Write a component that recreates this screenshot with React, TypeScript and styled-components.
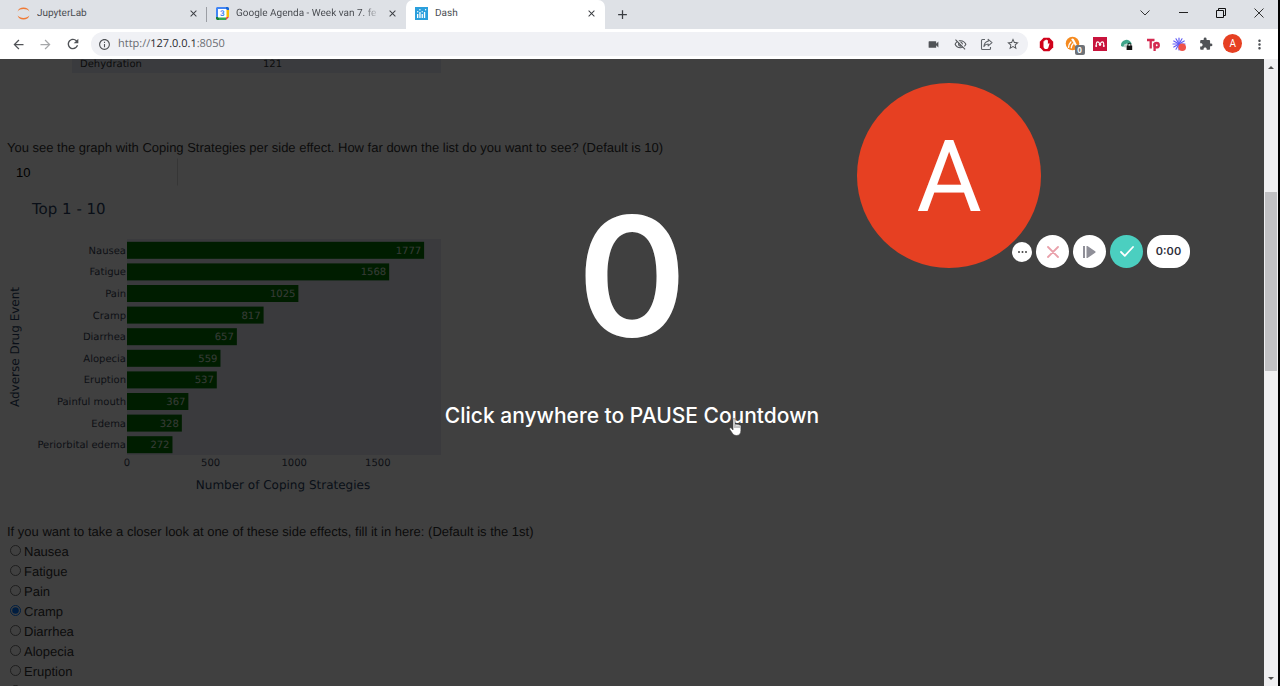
import React, { useState } from "react";
import styled, { createGlobalStyle } from "styled-components";
import {
  MdArrowBack,
  MdArrowForward,
  MdRefresh,
  MdInfoOutline,
  MdVideocam,
  MdOutlineVisibilityOff,
  MdStarBorder,
  MdExtension,
  MdMoreVert,
  MdClose,
  MdAdd,
} from "react-icons/md";

const uiFont = `"Open Sans", "Noto Sans", sans-serif`;
const tabFont = `Roboto, "Open Sans", sans-serif`;
const pageFont = `"Liberation Sans", Arial, sans-serif`;
const plotFont = `"DejaVu Sans", Verdana, sans-serif`;

const GlobalStyle = createGlobalStyle`
  * { box-sizing: border-box; }
  body { margin: 0; background: #000; font-family: ${pageFont}; text-rendering: geometricPrecision; }
  button { border: 0; padding: 0; background: none; color: inherit; font: inherit; cursor: pointer; }
`;

const Window = styled.div`
  display: flex;
  flex-direction: column;
  height: 100vh;
  margin-right: 2px;
  overflow: hidden;
  background: #fff;
`;

/* ---------- tab strip ---------- */

const TabStrip = styled.header`
  display: flex;
  flex: none;
  height: 29px;
  background: #dee1e6;
  color: #4a4d52;
  font: 10px/26px ${tabFont};
`;

const Tab = styled.div<{ $active?: boolean; $divider?: boolean }>`
  position: relative;
  display: flex;
  align-items: center;
  gap: 7px;
  width: 199px;
  height: 29px;
  padding: 0 8px 2px 9px;
  border-radius: 7px 7px 0 0;
  background: ${(p) => (p.$active ? "#fff" : "transparent")};

  &::before {
    content: "";
    position: absolute;
    display: ${(p) => (p.$divider ? "block" : "none")};
    left: -1px;
    top: 7px;
    width: 1px;
    height: 15px;
    background: #9b9ea4;
  }
`;

const FirstTab = styled(Tab)`
  width: 207px;
  padding-left: 17px;
`;

const TabTitle = styled.span<{ $fade?: boolean }>`
  flex: 1;
  min-width: 0;
  overflow: hidden;
  white-space: nowrap;
  ${(p) => p.$fade && "mask-image: linear-gradient(to right, #000 88%, transparent);"}
`;

const TabButton = styled.button`
  display: flex;
  color: #3a3d42;
`;

const NewTab = styled(TabButton)`
  align-items: center;
  justify-content: center;
  width: 34px;
  height: 28px;
`;

const WindowControls = styled.div`
  display: flex;
  margin-left: auto;
`;

const WindowButton = styled.button`
  display: flex;
  align-items: center;
  justify-content: center;
  width: 38px;
  height: 25px;
`;

/* ---------- toolbar ---------- */

const Toolbar = styled.nav`
  display: flex;
  flex: none;
  align-items: center;
  gap: 9px;
  height: 30px;
  padding: 0 9px;
  background: #fff;
  color: #505357;
`;

const NavButtons = styled.div`
  display: flex;
  gap: 8px;
`;

const ToolButton = styled.button<{ $muted?: boolean }>`
  position: relative;
  display: flex;
  align-items: center;
  justify-content: center;
  width: 19px;
  height: 20px;
  opacity: ${(p) => (p.$muted ? 0.5 : 1)};
`;

const AddressBar = styled.div`
  display: flex;
  flex: 1;
  align-items: center;
  gap: 7px;
  min-width: 0;
  height: 24px;
  padding: 0 5px 0 7px;
  border-radius: 12px;
  background: #f0f1f5;
`;

const AddressText = styled.div`
  flex: 1;
  color: #6a6d72;
  font: 11px/22px ${uiFont};

  b { font-weight: 400; color: #26282c; }
`;

const ToolGroup = styled.div<{ $width: number }>`
  display: flex;
  justify-content: space-between;
  width: ${(p) => p.$width}px;
`;

const Badge = styled.span`
  position: absolute;
  right: -2px;
  bottom: -1px;
  width: 10px;
  border-radius: 2px;
  background: #6e7277;
  color: #fff;
  font: 700 8px/10px ${uiFont};
  text-align: center;
`;

const Avatar = styled.button`
  width: 19px;
  height: 19px;
  border-radius: 50%;
  background: #e64022;
  color: #fff;
  font: 10px/19px Roboto, sans-serif;
`;

/* ---------- page ---------- */

const Viewport = styled.div`
  display: flex;
  flex: 1;
  min-height: 0;
`;

const Frame = styled.main`
  position: relative;
  flex: 1;
  min-width: 0;
  overflow: hidden;
  background: #fff;
`;

const Report = styled.div`
  padding-left: 7px;
  color: #333;
  font: 13px/20px ${pageFont};
`;

const EventTable = styled.table`
  width: 369px;
  margin: 0 0 65px 65px;
  border-collapse: collapse;
  background: #e5ecf6;
  font: 10px/12px ${plotFont};

  td { padding: 0 0 2px 8px; }
  td + td { width: 178px; padding-left: 0; }
`;

const Question = styled.label`
  display: block;
`;

const Amount = styled.input`
  display: block;
  width: 171px;
  height: 28px;
  margin: 0 0 4px;
  padding: 0 8px;
  border: 1px solid transparent;
  border-right-color: #d8d8d8;
  background: #fff;
  color: #000;
  font: 13px/20px ${pageFont};
`;

const Chart = styled.svg`
  display: block;
  margin-bottom: 22px;
  font-family: ${plotFont};
`;

const Choices = styled.fieldset`
  margin: 0;
  padding: 0;
  border: 0;

  legend { padding: 0; }
`;

const Choice = styled.label`
  display: flex;
  align-items: center;
  gap: 3px;
  padding-left: 3px;
`;

const Radio = styled.input`
  width: 11px;
  height: 11px;
  margin: 0 0 3px;
`;

/* ---------- recorder overlay ---------- */

const Countdown = styled.button`
  position: absolute;
  inset: 0;
  display: flex;
  flex-direction: column;
  align-items: center;
  gap: 40px;
  width: 100%;
  padding-top: 132px;
  background: rgba(0, 0, 0, 0.75);
  color: #fff;
  font-family: Inter, sans-serif;
  font-weight: 500;
`;

const Count = styled.span`
  font-size: 166px;
  font-weight: 600;
  line-height: 170px;
`;

const Caption = styled.span`
  font-size: 21px;
  line-height: 30px;
`;

const Pointer = styled.svg`
  position: absolute;
  left: calc(50% + 97px);
  top: 359px;
`;

const Bubble = styled.div`
  position: absolute;
  top: 24px;
  right: 223px;
  width: 184px;
  height: 185px;
  border-radius: 50%;
  background: #e64022;
  color: #fff;
  font: 100px/189px Roboto, sans-serif;
  text-align: center;
`;

const RecorderBar = styled.div`
  position: absolute;
  top: 176px;
  right: 74px;
  display: flex;
  align-items: center;
  gap: 4px;
`;

const RoundButton = styled.button<{ $size?: number; $accent?: boolean }>`
  display: flex;
  align-items: center;
  justify-content: center;
  width: ${(p) => p.$size ?? 33}px;
  height: ${(p) => p.$size ?? 33}px;
  border-radius: 50%;
  background: ${(p) => (p.$accent ? "#4bcfc0" : "#fff")};
`;

const Timer = styled.time`
  width: 43px;
  border-radius: 16px;
  background: #fff;
  color: #2e2e3a;
  font: 600 11px/33px Inter, sans-serif;
  text-align: center;
`;

/* ---------- scroll bar ---------- */

const ScrollBar = styled.div`
  display: flex;
  flex: none;
  flex-direction: column;
  align-items: center;
  width: 14px;
  background: #f0f0f2;
`;

const ScrollArrow = styled.svg`
  flex: none;
  width: 14px;
  height: 16px;
`;

const ScrollGap = styled.div<{ $share: number }>`
  flex: ${(p) => p.$share};
`;

const ScrollThumb = styled(ScrollGap)`
  width: 12px;
  background: #c1c1c4;
`;

/* ---------- drawings ---------- */

const JupyterIcon = () => (
  <svg width="13" height="13" viewBox="0 0 13 13" fill="#f07a35">
    <path d="M.6 4.500C1.200 2 3.600.5 6.500.5S11.800 2 12.400 4.500C11 2.900 9 2.100 6.500 2.100S2 2.900.6 4.500z" />
    <path d="M.6 8.500C1.200 11 3.600 12.500 6.500 12.500S11.800 11 12.400 8.500C11 10.100 9 10.900 6.500 10.900S2 10.100.6 8.500z" />
  </svg>
);

const CalendarIcon = () => (
  <svg width="13" height="13" viewBox="0 0 13 13">
    <path d="M1 0h9v3H3v7H0V1z" fill="#4285f4" />
    <path d="M10 0h2l1 1v2h-3z" fill="#1967d2" />
    <path d="M10 3h3v7h-3z" fill="#fbbc04" />
    <path d="M3 10h7v3H3z" fill="#34a853" />
    <path d="M0 10h3v3H1l-1-1z" fill="#188038" />
    <path d="M10 10h3l-3 3z" fill="#ea4335" />
    <path d="M2 2h8.500v8.500H2z" fill="#fff" />
    <text x="6.300" y="9.200" fontSize="8" fontWeight="700" fill="#4285f4" textAnchor="middle">3</text>
  </svg>
);

const DashIcon = () => (
  <svg width="13" height="13" viewBox="0 0 13 13">
    <path d="M0 0h13v13H0z" fill="#2b9fdc" />
    <g fill="#fff">
      <rect x="2" y="7" width="1.300" height="4" />
      <rect x="4.300" y="5" width="1.300" height="6" />
      <rect x="6.600" y="7" width="1.300" height="4" />
      <rect x="8.900" y="5" width="1.300" height="6" />
      <circle cx="2.700" cy="4.800" r=".7" />
      <circle cx="4.900" cy="2.800" r=".7" />
      <circle cx="7.200" cy="4.800" r=".7" />
      <circle cx="10.600" cy="2.800" r=".7" />
    </g>
  </svg>
);

const ShareIcon = () => (
  <svg width="13" height="13" viewBox="0 0 13 13" fill="none" stroke="#5f6368" strokeWidth="1.100" strokeLinejoin="round">
    <path d="M5 1.500H2.500a1 1 0 0 0-1 1v8a1 1 0 0 0 1 1h7a1 1 0 0 0 1-1V9" />
    <path d="M8.200 1.300 12 4.600 8.200 7.900V6C6.200 6 4.800 6.800 3.900 8.500 4.200 5.500 5.600 3.500 8.200 3.200z" />
  </svg>
);

const BlockerIcon = () => (
  <svg width="15" height="15" viewBox="0 0 15 15">
    <path d="M4.600.8h5.800l3.800 3.900v5.600l-3.800 3.900H4.600L.8 10.300V4.700z" fill="#d0021b" />
    <path d="M4.500 7V4.600c0-.8 1-.8 1 0V3.500c0-.8 1.100-.8 1.100 0V3c0-.8 1.200-.8 1.200 0v.6c0-.8 1.100-.8 1.100 0v4l.5-1c.5-.7 1.300-.4 1.100.2L9.400 10.500c-.4 1.100-1.100 1.600-2.200 1.600-1.800 0-2.700-1.200-2.700-2.900z" fill="#fff" />
  </svg>
);

const AvastIcon = () => (
  <svg width="16" height="16" viewBox="0 0 16 16">
    <circle cx="7.500" cy="7.500" r="6.800" fill="#f58a1f" />
    <path d="M6.200 3.200c.6-1 2-1 2.700 0l3.300 6.300-1.600 1z" fill="#fff" />
    <path d="M3.600 11.200c.2-2.200 1-4 2.300-5.200M6.300 11.800c.1-1.800.7-3 1.800-4" stroke="#fff" strokeWidth="1.400" fill="none" strokeLinecap="round" />
  </svg>
);

const MendeleyIcon = () => (
  <svg width="14" height="14" viewBox="0 0 14 14">
    <path d="M0 0h14v14H0z" fill="#c8143c" />
    <path d="M3.300 8.500C3.100 6 3.700 4.900 4.600 4.900S6.400 6 7 7c.6-1 1.500-2.100 2.400-2.100s1.500 1.100 1.300 3.600" stroke="#fff" strokeWidth="1.100" fill="none" />
    <g fill="#fff"><circle cx="3.200" cy="9" r="1" /><circle cx="7" cy="7.600" r="1.300" /><circle cx="10.800" cy="9" r="1" /></g>
  </svg>
);

const PrivacyIcon = () => (
  <svg width="13" height="13" viewBox="0 0 13 13">
    <path d="M1 8A5.500 5.500 0 0 1 11.800 6L8.500 6.500C6.500 4.800 4 6 3.400 9z" fill="#3fa58a" />
    <path d="M3.400 9c.3-2 1.700-3.500 3.600-3.200L6 9.500z" fill="#b9cfc9" />
    <path d="M6.600 7.600h5.600V12H6.600z" fill="#111" />
    <path d="M7.900 8V6.700c0-1.900 3-1.900 3 0V8" fill="none" stroke="#111" strokeWidth="1" />
  </svg>
);

const TpIcon = () => (
  <svg width="15" height="15" viewBox="0 0 15 15" fill="none" stroke="#d42a50" strokeWidth="2.300">
    <path d="M1 3h7.500M4.700 3v8.500M8.600 14V6" />
    <circle cx="10.600" cy="8.200" r="2.200" />
  </svg>
);

const LoomIcon = () => (
  <svg width="15" height="15" viewBox="0 0 15 15">
    <g stroke="#625df5" strokeWidth="1.200" strokeLinecap="round">
      {[0, 30, 60, 90, 120, 150].map((angle) => (
        <path key={angle} d="M7 1v12" transform={`rotate(${angle} 7 7)`} />
      ))}
    </g>
    <circle cx="10.200" cy="10.200" r="3.800" fill="#ee5349" />
  </svg>
);

/* ---------- chart ---------- */

const events = [
  { name: "Nausea", count: 1777 },
  { name: "Fatigue", count: 1568 },
  { name: "Pain", count: 1025 },
  { name: "Cramp", count: 817 },
  { name: "Diarrhea", count: 657 },
  { name: "Alopecia", count: 559 },
  { name: "Eruption", count: 537 },
  { name: "Painful mouth", count: 367 },
  { name: "Edema", count: 328 },
  { name: "Periorbital edema", count: 272 },
];

const PLOT = { left: 120, top: 49, width: 314, height: 216 };
const scaleX = (value: number) => PLOT.left + (value * PLOT.width) / 1878;
const rowHeight = PLOT.height / events.length;

const StrategyChart = () => (
  <Chart width="450" height="310" role="img" aria-label="Number of coping strategies per adverse drug event">
    <text x="25" y="24" fontSize="15" fill="#2a3f5f">Top 1 - 10</text>
    <rect x={PLOT.left} y={PLOT.top} width={PLOT.width} height={PLOT.height} fill="#e5e7f4" />
    {events.map(({ name, count }, i) => {
      const middle = PLOT.top + rowHeight * (i + 0.5);
      return (
        <g key={name} fontSize="10" textAnchor="end">
          <text x={PLOT.left - 1} y={middle + 4} fill="#3c4658">{name}</text>
          <rect x={PLOT.left} y={middle - 8} width={scaleX(count) - PLOT.left} height="17" fill="#007400" />
          <text x={scaleX(count) - 3} y={middle + 4} fill="#d8e8d8">{count}</text>
        </g>
      );
    })}
    {[0, 500, 1000, 1500].map((tick) => (
      <text key={tick} x={scaleX(tick)} y="276" fontSize="10" textAnchor="middle" fill="#3c4658">{tick}</text>
    ))}
    <text x="276" y="299" fontSize="12" textAnchor="middle" fill="#2a3f5f">Number of Coping Strategies</text>
    <text transform="translate(12 157) rotate(-90)" fontSize="12" textAnchor="middle" fill="#2a3f5f">Adverse Drug Event</text>
  </Chart>
);

export default function App() {
  const [amount, setAmount] = useState("10");
  const [selected, setSelected] = useState("Cramp");

  return (
    <>
      <GlobalStyle />
      <Window>
        <TabStrip>
          <FirstTab>
            <JupyterIcon />
            <TabTitle>JupyterLab</TabTitle>
            <TabButton aria-label="Close tab"><MdClose size={11} /></TabButton>
          </FirstTab>
          <Tab $divider>
            <CalendarIcon />
            <TabTitle $fade>Google Agenda - Week van 7. fe</TabTitle>
            <TabButton aria-label="Close tab"><MdClose size={11} /></TabButton>
          </Tab>
          <Tab $active>
            <DashIcon />
            <TabTitle>Dash</TabTitle>
            <TabButton aria-label="Close tab"><MdClose size={11} /></TabButton>
          </Tab>
          <NewTab aria-label="New tab"><MdAdd size={15} /></NewTab>
          <WindowControls>
            <WindowButton aria-label="Search tabs">
              <svg width="10" height="6" fill="none" stroke="#333"><path d="M.5.5 5 5 9.500.5" /></svg>
            </WindowButton>
            <WindowButton aria-label="Minimize">
              <svg width="9" height="1"><path d="M0 0h9v1H0z" fill="#222" /></svg>
            </WindowButton>
            <WindowButton aria-label="Restore">
              <svg width="10" height="10" fill="none" stroke="#111"><path d="M.5 2.500h7v7h-7zM2.500 2.500v-2h7v7h-2" /></svg>
            </WindowButton>
            <WindowButton aria-label="Close window">
              <svg width="10" height="10" fill="none" stroke="#333"><path d="M.5.5l9 9M9.500.5l-9 9" /></svg>
            </WindowButton>
          </WindowControls>
        </TabStrip>

        <Toolbar>
          <NavButtons>
            <ToolButton aria-label="Back"><MdArrowBack size={15} /></ToolButton>
            <ToolButton aria-label="Forward" $muted><MdArrowForward size={15} /></ToolButton>
            <ToolButton aria-label="Reload"><MdRefresh size={16} /></ToolButton>
          </NavButtons>
          <AddressBar>
            <MdInfoOutline size={13} />
            <AddressText>http://<b>127.0.0.1</b>:8050</AddressText>
            <ToolGroup $width={99}>
              <ToolButton aria-label="Camera"><MdVideocam size={13} /></ToolButton>
              <ToolButton aria-label="Cookies blocked"><MdOutlineVisibilityOff size={13} /></ToolButton>
              <ToolButton aria-label="Share"><ShareIcon /></ToolButton>
              <ToolButton aria-label="Bookmark"><MdStarBorder size={14} /></ToolButton>
            </ToolGroup>
          </AddressBar>
          <ToolGroup $width={232}>
            <ToolButton aria-label="Content blocker"><BlockerIcon /></ToolButton>
            <ToolButton aria-label="Avast"><AvastIcon /><Badge>0</Badge></ToolButton>
            <ToolButton aria-label="Mendeley"><MendeleyIcon /></ToolButton>
            <ToolButton aria-label="Privacy"><PrivacyIcon /></ToolButton>
            <ToolButton aria-label="Tp"><TpIcon /></ToolButton>
            <ToolButton aria-label="Loom"><LoomIcon /></ToolButton>
            <ToolButton aria-label="Extensions"><MdExtension size={14} /></ToolButton>
            <Avatar>A</Avatar>
            <ToolButton aria-label="Menu"><MdMoreVert size={15} /></ToolButton>
          </ToolGroup>
        </Toolbar>

        <Viewport>
          <Frame>
            <Report>
              <EventTable>
                <tbody>
                  <tr><td>Dehydration</td><td>121</td></tr>
                </tbody>
              </EventTable>
              <Question htmlFor="amount">
                You see the graph with Coping Strategies per side effect. How far down the list do you want to see? (Default is 10)
              </Question>
              <Amount id="amount" value={amount} onChange={(e) => setAmount(e.target.value)} />
              <StrategyChart />
              <Choices>
                <legend>If you want to take a closer look at one of these side effects, fill it in here: (Default is the 1st)</legend>
                {events.slice(0, 8).map(({ name }) => (
                  <Choice key={name}>
                    <Radio type="radio" name="event" checked={selected === name} onChange={() => setSelected(name)} />
                    {name}
                  </Choice>
                ))}
              </Choices>
            </Report>

            <Countdown>
              <Count>0</Count>
              <Caption>Click anywhere to PAUSE Countdown</Caption>
            </Countdown>
            <Bubble>A</Bubble>
            <RecorderBar>
              <RoundButton $size={20} aria-label="More">
                <svg width="9" height="2" fill="#444"><circle cx="1" cy="1" r="1" /><circle cx="4.500" cy="1" r="1" /><circle cx="8" cy="1" r="1" /></svg>
              </RoundButton>
              <RoundButton aria-label="Cancel recording">
                <svg width="12" height="12" stroke="#e9a0aa" strokeWidth="1.800" strokeLinecap="round"><path d="M1 1l10 10M11 1 1 11" /></svg>
              </RoundButton>
              <RoundButton aria-label="Skip countdown">
                <svg width="13" height="12" fill="#8f8f98"><path d="M0 0h2v12H0zM3.500 0h1L12.500 5.400v1.200L4.500 12h-1z" /></svg>
              </RoundButton>
              <RoundButton $accent aria-label="Finish recording">
                <svg width="14" height="11" fill="none" stroke="#fff" strokeWidth="1.800" strokeLinecap="round" strokeLinejoin="round"><path d="M1 6l3.800 3.800L13 1" /></svg>
              </RoundButton>
              <Timer>0:00</Timer>
            </RecorderBar>
            <Pointer width="13" height="18" viewBox="0 0 13 18" aria-hidden="true">
              <path d="M4 1.500c0-1.300 2-1.300 2 0v5c.2-.9 1.900-.8 2 .3.300-.8 1.900-.6 1.900.5.500-.6 2-.4 2 .8v4.400c0 3.200-1.600 5-4.400 5-2.200 0-3.400-1-4.400-2.700L.8 11.400c-.7-1.300.8-2.200 1.700-1.200L4 12z" fill="#fff" stroke="#404040" strokeWidth=".6" />
              <path d="M6 7v3M8 7.500V10M10 8v2" stroke="#555" strokeWidth=".7" />
            </Pointer>
          </Frame>
          <ScrollBar>
            <ScrollArrow viewBox="0 0 14 16"><path d="M4 10h6L7 7z" fill="#505050" /></ScrollArrow>
            <ScrollGap $share={117} />
            <ScrollThumb $share={179} />
            <ScrollGap $share={299} />
            <ScrollArrow viewBox="0 0 14 16"><path d="M4 7h6l-3 3z" fill="#505050" /></ScrollArrow>
          </ScrollBar>
        </Viewport>
      </Window>
    </>
  );
}
